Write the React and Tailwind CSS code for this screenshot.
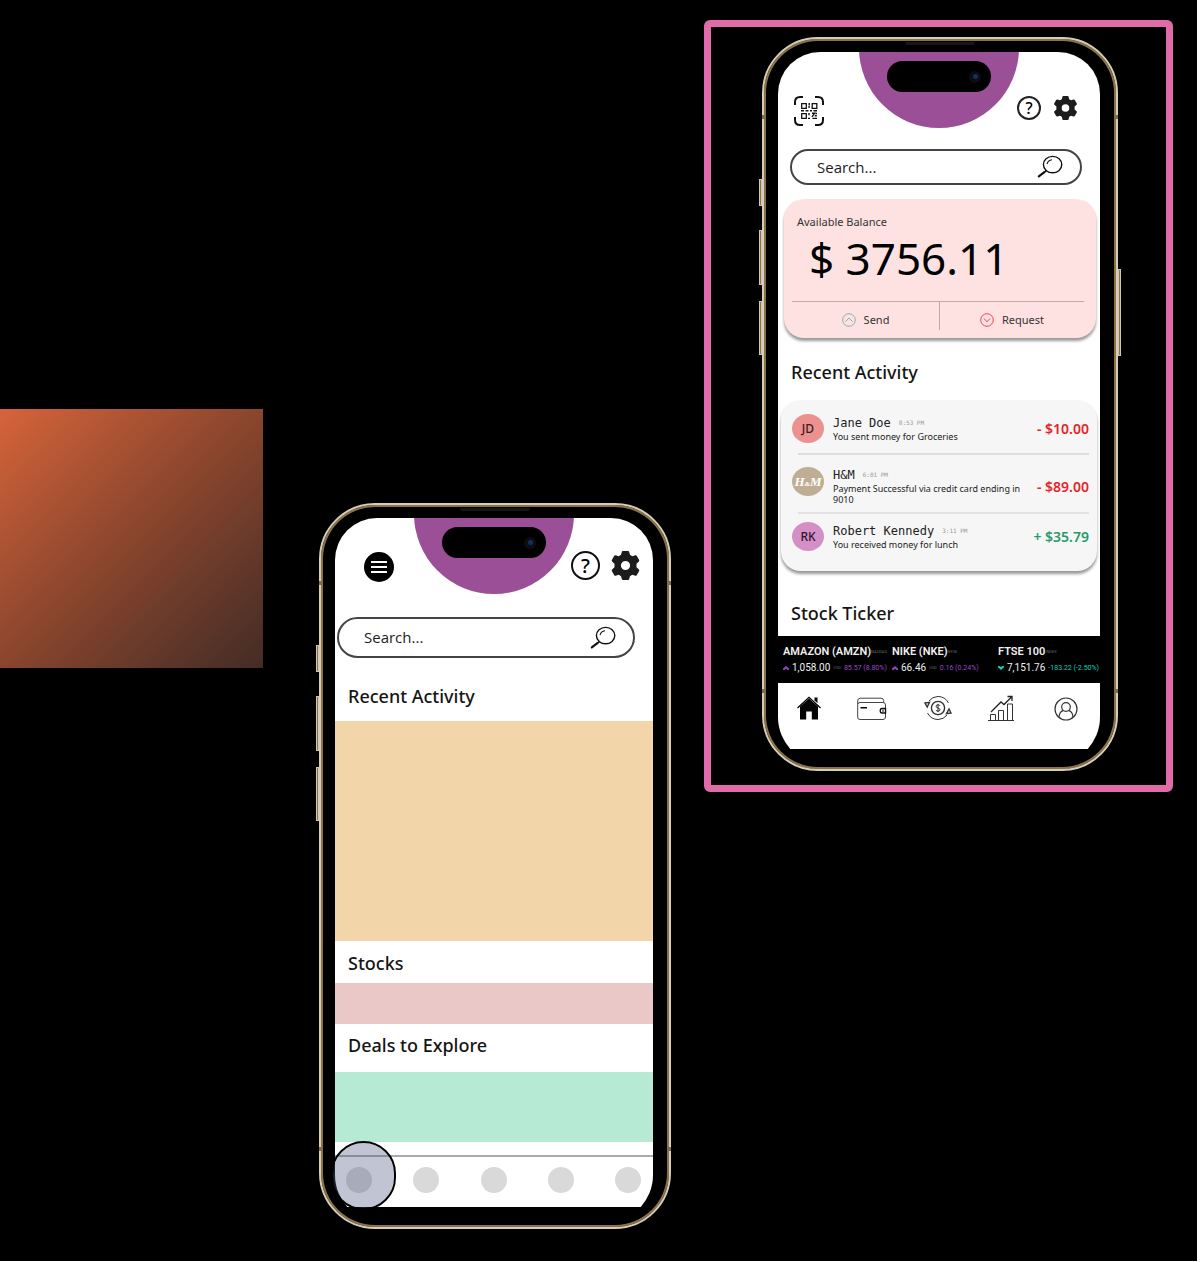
import React from "react";

const sans = "font-['Noto_Sans','Open_Sans',sans-serif]";

function Gear({ className }) {
  return (
    <svg viewBox="0 0 24 24" className={className} aria-hidden="true">
      <path
        fill="#1c1c1c"
        fillRule="evenodd"
        d="M9 0.6Q9.2 0 9.9 0H14.1Q14.8 0 15 0.6L15.7 3.2L17.6 4.3L20.2 3.6Q20.9 3.4 21.3 4L23.3 7.5Q23.6 8.2 23.1 8.7L21.1 10.6V13.4L23.1 15.3Q23.6 15.8 23.3 16.5L21.3 20Q20.9 20.6 20.2 20.4L17.6 19.7L15.7 20.8L15 23.4Q14.8 24 14.1 24H9.9Q9.2 24 9 23.4L8.3 20.8L6.4 19.7L3.8 20.4Q3.1 20.6 2.7 20L0.7 16.5Q0.4 15.8 0.9 15.3L2.9 13.4V10.6L0.9 8.7Q0.4 8.2 0.7 7.5L2.7 4Q3.1 3.4 3.8 3.6L6.4 4.3L8.3 3.2ZM12 8.2A3.8 3.8 0 1 0 12 15.8A3.8 3.8 0 1 0 12 8.2Z"
      />
    </svg>
  );
}

function Magnifier() {
  return (
    <svg viewBox="0 0 26 24" className="h-6 w-[26px]" fill="none" stroke="#111" aria-hidden="true">
      <ellipse cx="15.6" cy="9.6" rx="9.2" ry="8.2" strokeWidth="1.4" />
      <path d="M10 9.2Q10.8 5.4 15 4.8" strokeWidth="1.1" />
      <path d="M9.6 15.4L6.8 17.6" strokeWidth="1.4" />
      <path d="M7.4 17.2L1.8 21.4" strokeWidth="2.2" strokeLinecap="round" />
    </svg>
  );
}

function QrScan() {
  return (
    <svg viewBox="0 0 30 30" className="h-[30px] w-[30px]" fill="none" stroke="#111" aria-hidden="true">
      <path
        d="M1 9V6Q1 1 6 1H9M21 1H24Q29 1 29 6V9M29 21V24Q29 29 24 29H21M9 29H6Q1 29 1 24V21"
        strokeWidth="2"
      />
      <path d="M7.7 7.7H12.3V12.3H7.7ZM18.2 7.7H22.8V12.3H18.2ZM7.7 17.7H12.3V22.3H7.7Z" strokeWidth="1.3" />
      <path
        d="M15.2 7V9.5M14.2 11H16M7 14.7H10M11.5 14.7H14.5M16 14.7H18M19.5 14.7H23M15 17V19.2M14 22.4H16M18 17.3H20.5L18 20.8M21.5 17.5H23M20.8 19.8H22.8M18.5 22.4H23"
        strokeWidth="1.4"
      />
    </svg>
  );
}

function PhoneFrame({ children, rightButton }) {
  return (
    <div className="relative rounded-[56px] border-2 border-[#d6cdbb] bg-black pt-[13px] pr-4 pb-5 pl-[14px] shadow-[inset_0_0_0_2px_#8b7345]">
      <span className="absolute top-[140px] -left-[5px] h-[27px] w-[3px] border border-[#cfc6b4] bg-[#8b7345]" />
      <span className="absolute top-[191px] -left-[5px] h-[55px] w-[3px] border border-[#cfc6b4] bg-[#8b7345]" />
      <span className="absolute top-[262px] -left-[5px] h-[54px] w-[3px] border border-[#cfc6b4] bg-[#8b7345]" />
      {rightButton && (
        <span className="absolute top-[230px] -right-[5px] h-[87px] w-[3px] border border-[#cfc6b4] bg-[#8b7345]" />
      )}
      <span className="absolute top-[3px] left-[40%] h-[3px] w-[20%] rounded-b bg-[#161616]" />
      <span className="absolute top-[76px] -left-0.5 h-1 w-1 bg-[#7d6d58]" />
      <span className="absolute top-[76px] -right-0.5 h-1 w-1 bg-[#7d6d58]" />
      <span className="absolute bottom-[76px] -left-0.5 h-1 w-1 bg-[#7d6d58]" />
      <span className="absolute bottom-[76px] -right-0.5 h-1 w-1 bg-[#7d6d58]" />
      <div className="overflow-hidden">
        <div className="-mb-4 overflow-hidden rounded-t-[42px] rounded-b-[48px] bg-white pb-4">{children}</div>
      </div>
    </div>
  );
}

function TopBar({ left, children, className }) {
  return (
    <header className={className}>
      <div className="absolute top-0 left-1/2 h-[76px] w-40 -translate-x-1/2 overflow-hidden">
        <div className="-mt-[84px] h-40 rounded-full bg-[#9b4f96]" />
      </div>
      <div className="absolute top-[9px] left-1/2 flex h-[31px] w-[104px] -translate-x-1/2 items-center justify-end rounded-full bg-black pr-[10px]">
        <span className="flex h-3 w-3 items-center justify-center rounded-full bg-[#0b0d14]">
          <span className="h-[5px] w-[5px] rounded-full bg-[#1b2c5e]" />
        </span>
      </div>
      {left}
      {children}
    </header>
  );
}

function Search({ className }) {
  return (
    <form className={className} onSubmit={(e) => e.preventDefault()}>
      <input
        type="text"
        aria-label="Search"
        placeholder="Search..."
        className="min-w-0 flex-1 bg-transparent font-['Open_Sans','Noto_Sans',sans-serif] text-[15px] font-medium text-black outline-none placeholder:text-[#1c1c1c]"
      />
      <button type="submit" aria-label="Submit search">
        <Magnifier />
      </button>
    </form>
  );
}

function Heading({ children }) {
  return <h2 className="text-[18px] leading-6 font-medium text-[#151515]">{children}</h2>;
}

function WireframePhone() {
  return (
    <div className="relative">
      <PhoneFrame>
        <TopBar
          className="relative flex h-[99px] items-start justify-between pt-[33px] pr-[13px] pl-[29px]"
          left={
            <button
              type="button"
              aria-label="Menu"
              className="mt-px flex h-[30px] w-[30px] flex-col items-center justify-center gap-[3px] rounded-full bg-black"
            >
              <span className="h-0.5 w-4 bg-white" />
              <span className="h-0.5 w-4 bg-white" />
              <span className="h-0.5 w-4 bg-white" />
            </button>
          }
        >
          <div className="flex gap-[11px]">
            <button
              type="button"
              aria-label="Help"
              className="flex h-[29px] w-[29px] items-center justify-center rounded-full border-2 border-[#111] text-[20px] font-medium"
            >
              ?
            </button>
            <button type="button" aria-label="Settings">
              <Gear className="h-[29px] w-[29px]" />
            </button>
          </div>
        </TopBar>
        <Search className="mr-[18px] ml-0.5 flex h-[41px] items-center rounded-full border-2 border-[#444] pr-[17px] pl-[25px]" />
        <div className="px-[13px] pt-[26px] pb-[13px]">
          <Heading>Recent Activity</Heading>
        </div>
        <div className="h-[220px] bg-[#f2d5a9]" />
        <div className="px-[13px] pt-[10px] pb-2">
          <Heading>Stocks</Heading>
        </div>
        <div className="h-[41px] bg-[#eac8c8]" />
        <div className="px-[13px] pt-[9px] pb-[15px]">
          <Heading>Deals to Explore</Heading>
        </div>
        <div className="h-[70px] bg-[#b7ead4]" />
        <nav
          aria-label="Placeholder tabs"
          className="mt-[13px] flex h-[52px] items-start justify-between border-t-2 border-[#aaa] pt-[10px] pr-3 pl-[11px]"
        >
          {[1, 2, 3, 4, 5].map((n) => (
            <button key={n} type="button" aria-label={"Tab " + n} className="h-[26px] w-[26px] rounded-full bg-[#d9d9d9]" />
          ))}
        </nav>
      </PhoneFrame>
      <span className="absolute bottom-[19px] left-3 h-[69px] w-[65px] rounded-full border-2 border-black bg-[#4c5881]/35 bg-clip-padding" />
    </div>
  );
}

function Activity({ avatar, avatarClass, name, time, note, amount, amountClass, className }) {
  return (
    <li className={className}>
      <span className={avatarClass}>{avatar}</span>
      <div className="min-w-0 flex-1">
        <p className="flex items-center gap-2 font-['DejaVu_Sans_Mono',monospace] text-[12px] leading-4 text-[#222]">
          {name}
          <span className="text-[6px] leading-4 text-[#999]">{time}</span>
        </p>
        <p className="text-[9px] leading-[11px] text-[#222]">{note}</p>
      </div>
      <span className={amountClass}>{amount}</span>
    </li>
  );
}

function Quote({ name, tag, price, unit, change, down }) {
  return (
    <li className="whitespace-nowrap">
      <p className="flex items-center text-[11px] leading-[14px] font-semibold">
        {name}
        <span className="text-[4px] font-normal text-[#666]">{tag}</span>
      </p>
      <p className="mt-[3px] flex items-center gap-[3px] text-[10px] leading-3">
        <svg viewBox="0 0 6 4" className="h-1 w-1.5 shrink-0" aria-hidden="true">
          {down ? (
            <path d="M0 0H1.5L3 1L4.5 0H6V1.2L3 4L0 1.2Z" fill="#14cdbb" />
          ) : (
            <path d="M0 4V2.6L3 0L6 2.6V4H4.5L3 2.8L1.5 4Z" fill="#9340c4" />
          )}
        </svg>
        {price}
        {unit && <span className="text-[4px] text-[#666]">{unit}</span>}
        <span className={down ? "text-[7px] text-[#14cdbb]" : "text-[7px] text-[#9a48c8]"}>{change}</span>
      </p>
    </li>
  );
}

function HomeIcon() {
  return (
    <svg viewBox="0 0 24 24" className="h-6 w-6" aria-hidden="true">
      <path d="M17.5 1.5H20.5V7L17.5 4.5ZM12 2.5L21 10.5V23.5H14.8V15.5H9.2V23.5H3V10.5Z" fill="#050505" />
      <path d="M0.5 12L12 1.3L23.5 12" fill="none" stroke="#050505" strokeWidth="1.3" />
    </svg>
  );
}

function WalletIcon() {
  return (
    <svg viewBox="0 0 30 24" className="h-6 w-[30px]" fill="none" stroke="#444" aria-hidden="true">
      <path d="M3 5.5H26Q28.5 5.5 28.5 8V20Q28.5 22.5 26 22.5H3Q0.7 22.5 0.7 20V4Q0.7 1.2 3.5 1.2H24Q26.5 1.2 26.7 3.5V5.5M1 7Q1 5.5 3 5.5" />
      <path d="M3.5 10.7H10" stroke="#050505" strokeWidth="1.6" />
      <path d="M28.5 11.5H25Q23.3 11.5 23.3 13V14.5Q23.3 16 25 16H28.5Z" stroke="#111" strokeWidth="1.4" />
      <path d="M26 12.5V15" stroke="#111" />
    </svg>
  );
}

function ExchangeIcon() {
  return (
    <svg viewBox="0 0 28 26" className="h-[26px] w-7" fill="none" stroke="#333" aria-hidden="true">
      <circle cx="14" cy="13" r="6.6" strokeWidth="1.4" />
      <path d="M16 10.8Q15.6 9.8 14 9.8Q12.1 9.8 12.1 11.3Q12.1 12.6 14 13Q16 13.4 16 14.8Q16 16.2 14 16.2Q12.3 16.2 12 15M14 8.8V17.2" />
      <path d="M5 6Q8.5 1.5 14 1.5Q21 1.5 24.5 8M23 20Q19.5 24.5 14 24.5Q7 24.5 3.5 18" />
      <path d="M1 8L5.5 7.4L3.2 12ZM27 18L22.5 18.6L25 14Z" strokeWidth="1.4" />
    </svg>
  );
}

function ChartIcon() {
  return (
    <svg viewBox="0 0 26 27" className="h-[27px] w-[26px]" fill="none" stroke="#333" aria-hidden="true">
      <path d="M0 25.5H26M2.5 25.5V19.5H7.5V25.5M10.5 25.5V15.5H15.5V25.5M19.5 25.5V9H24.5V25.5" />
      <path d="M3 17L13 7L16 9.5L24 1.5M19.5 1.5H24V6" stroke="#222" strokeWidth="1.3" />
    </svg>
  );
}

function ProfileIcon() {
  return (
    <svg viewBox="0 0 24 24" className="h-6 w-6" fill="none" stroke="#333" strokeWidth="1.2" aria-hidden="true">
      <circle cx="12" cy="12" r="11" />
      <circle cx="12" cy="10" r="4.3" />
      <path d="M5 20Q5.5 14.5 9.2 13.6M19 20Q18.5 14.5 14.8 13.6" />
    </svg>
  );
}

function HomePhone() {
  const avatar = "flex h-[29px] w-8 shrink-0 items-center justify-center rounded-[50%] text-[12px] font-medium";
  const amount = "shrink-0 self-center text-[14px] font-semibold whitespace-nowrap";
  return (
    <PhoneFrame rightButton>
      <TopBar
        className="relative flex h-[97px] items-start justify-between pt-11 pr-[22px] pl-4"
        left={
          <button type="button" aria-label="Scan code">
            <QrScan />
          </button>
        }
      >
        <div className="flex gap-3">
          <button
            type="button"
            aria-label="Help"
            className="flex h-6 w-6 items-center justify-center rounded-full border-2 border-[#222] text-[16px] font-medium"
          >
            ?
          </button>
          <button type="button" aria-label="Settings">
            <Gear className="h-6 w-[25px]" />
          </button>
        </div>
      </TopBar>
      <Search className="mr-[18px] ml-3 flex h-9 items-center rounded-full border-2 border-[#444] pr-[17px] pl-[25px]" />

      <section className="mt-[14px] mr-1 ml-1.5 rounded-[20px] bg-[#fee2e2] pt-4 pr-3 pb-2 pl-2 shadow-[0_3px_3px_#00000066]">
        <p className="pl-[5px] text-[11px] leading-[14px] text-[#333]">Available Balance</p>
        <p className="pl-[17px] text-[44px] leading-[58px] text-black">$ 3756.11</p>
        <div className="mt-[14px] grid grid-cols-[37fr_36fr] border-t border-[#bfa9ab]">
          <button
            type="button"
            className="flex h-7 items-center justify-center gap-2 border-r border-[#bfa9ab] pt-2 text-[11px] text-[#333]"
          >
            <svg viewBox="0 0 14 14" className="h-[14px] w-[14px]" fill="none" stroke="#7fb5ae" aria-hidden="true">
              <circle cx="7" cy="7" r="6.3" />
              <path d="M3.5 8.5L7 5L10.5 8.5" />
            </svg>
            Send
          </button>
          <button type="button" className="flex h-7 items-center justify-center gap-2 pt-2 text-[11px] text-[#333]">
            <svg viewBox="0 0 14 14" className="h-[14px] w-[14px]" fill="none" stroke="#e5484d" aria-hidden="true">
              <circle cx="7" cy="7" r="6.3" />
              <path d="M4 5.5L7 8.8L10 5.5" />
            </svg>
            Request
          </button>
        </div>
      </section>

      <div className="px-[13px] pt-[22px] pb-4">
        <Heading>Recent Activity</Heading>
      </div>

      <ul className="mr-[3px] ml-[3px] rounded-[20px] bg-[#f6f6f6] pt-[14px] pr-2 pb-4 pl-[11px] shadow-[0_3px_3px_#00000066]">
        <Activity
          className="flex items-center gap-[9px] pb-[10px]"
          avatar="JD"
          avatarClass={avatar + " bg-[#ec9090] text-[#3b1c22]"}
          name="Jane Doe"
          time="8:53 PM"
          note="You sent money for Groceries"
          amount="- $10.00"
          amountClass={amount + " text-[#e3242b]"}
        />
        <li aria-hidden="true" className="ml-1.5 h-0.5 bg-[#dedede]" />
        <Activity
          className="flex items-start gap-[9px] pt-3 pb-[7px]"
          avatar={
            <span className="font-['Liberation_Serif',serif] text-[13px] font-bold italic">
              H<span className="text-[7px]">&amp;</span>M
            </span>
          }
          avatarClass={avatar + " bg-[#bfae94] text-white"}
          name="H&M"
          time="6:01 PM"
          note="Payment Successful via credit card ending in 9010"
          amount="- $89.00"
          amountClass={amount + " text-[#e3242b]"}
        />
        <li aria-hidden="true" className="ml-1.5 h-0.5 bg-[#e2e2e2]" />
        <Activity
          className="flex items-center gap-[9px] pt-2 pb-1"
          avatar="RK"
          avatarClass={avatar + " bg-[#d48fc7] text-[#2f1430]"}
          name="Robert Kennedy"
          time="3:11 PM"
          note="You received money for lunch"
          amount="+ $35.79"
          amountClass={amount + " text-[#259b68]"}
        />
      </ul>

      <div className="px-[13px] pt-[30px] pb-[11px]">
        <Heading>Stock Ticker</Heading>
      </div>

      <ul className="grid h-[47px] grid-cols-[109fr_106fr_102fr] items-center bg-black pl-[5px] font-['Roboto','Inter',sans-serif] text-[#f0f0f0]">
        <Quote name="AMAZON (AMZN)" tag="NASDAQ" price="1,058.00" unit="USD" change="85.57 (8.80%)" />
        <Quote name="NIKE (NKE)" tag="NYSE" price="66.46" unit="USD" change="0.16 (0.24%)" />
        <Quote name="FTSE 100" tag="INDEX" price="7,151.76" change="-183.22 (-2.50%)" down />
      </ul>

      <nav aria-label="Main" className="flex h-[66px] items-start justify-between pt-3 pr-[22px] pl-[19px]">
        <button type="button" aria-label="Home" className="mt-px">
          <HomeIcon />
        </button>
        <button type="button" aria-label="Wallet" className="mt-0.5">
          <WalletIcon />
        </button>
        <button type="button" aria-label="Transfers">
          <ExchangeIcon />
        </button>
        <button type="button" aria-label="Investments" className="mr-1">
          <ChartIcon />
        </button>
        <button type="button" aria-label="Profile" className="mt-0.5">
          <ProfileIcon />
        </button>
      </nav>
    </PhoneFrame>
  );
}

export default function App() {
  return (
    <main
      className={
        sans +
        " grid min-h-screen grid-cols-[263fr_56fr_352fr_33fr_469fr_24fr] items-start border-r-[3px] border-b border-white bg-black"
      }
    >
      <div className="col-start-1 mt-[409px] h-[259px] bg-linear-to-br from-[#d6643a] via-[#8a452d] to-[#432c25]" />
      <div className="col-start-3 mt-[503px]">
        <WireframePhone />
      </div>
      <div className="col-start-5 mt-5 rounded-md border-[7px] border-[#e06ba9] pt-[10px] pr-12 pb-[14px] pl-[51px]">
        <HomePhone />
      </div>
    </main>
  );
}
